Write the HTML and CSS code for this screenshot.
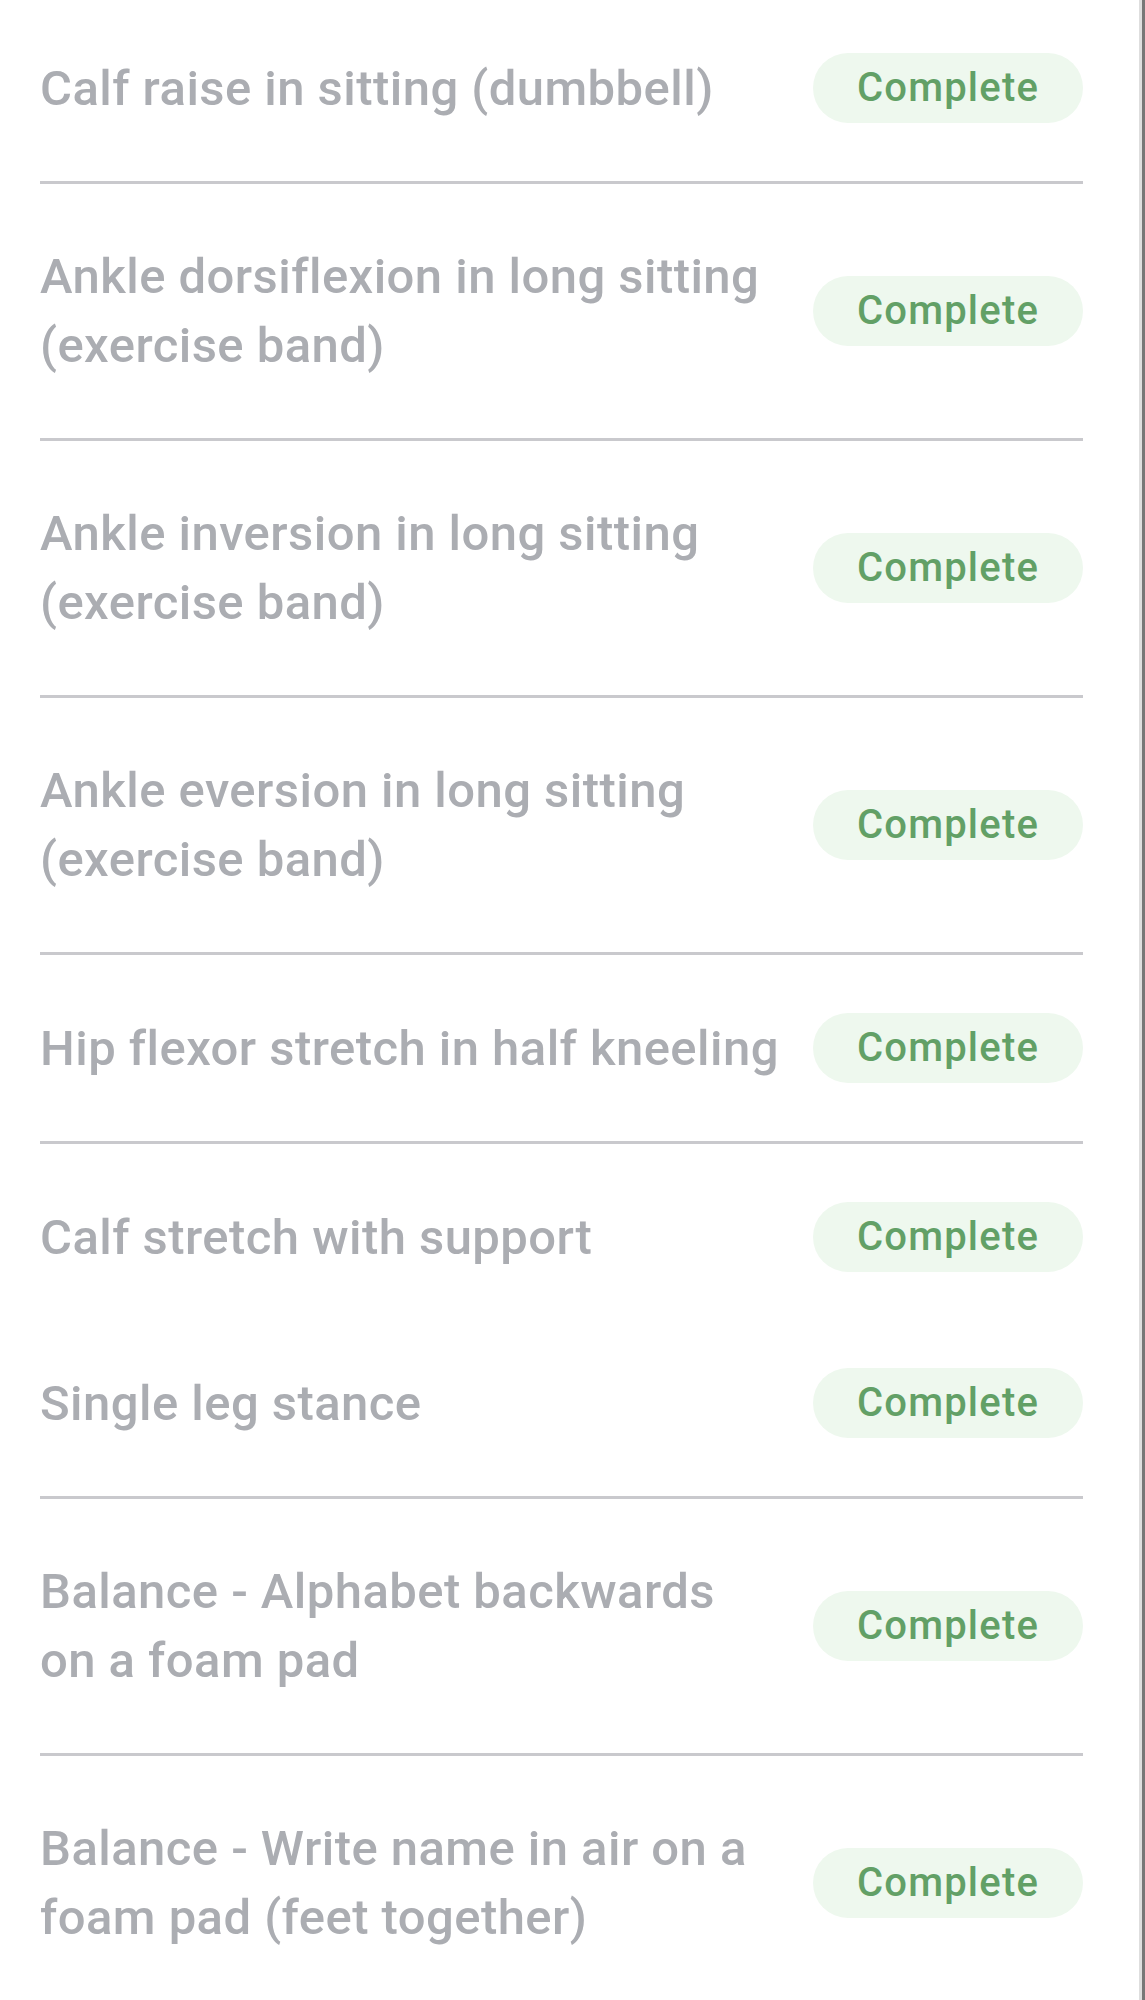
FILE: index.html
```html
<!DOCTYPE html>
<html lang="en">
<head>
  <meta charset="UTF-8">
  <meta name="viewport" content="width=device-width, initial-scale=1.0">
  <title>Exercises</title>
  <link rel="stylesheet" href="styles.css">
</head>
<body>

  <div class="screen">
    <ul class="exercise-list">
      <li class="exercise first">
        <span class="exercise-name">Calf raise in sitting (dumbbell)</span>
        <span class="status">Complete</span>
      </li>
      <li class="exercise">
        <span class="exercise-name">Ankle dorsiflexion in long sitting (exercise band)</span>
        <span class="status">Complete</span>
      </li>
      <li class="exercise">
        <span class="exercise-name">Ankle inversion in long sitting (exercise band)</span>
        <span class="status">Complete</span>
      </li>
      <li class="exercise">
        <span class="exercise-name">Ankle eversion in long sitting (exercise band)</span>
        <span class="status">Complete</span>
      </li>
      <li class="exercise">
        <span class="exercise-name">Hip flexor stretch in half kneeling</span>
        <span class="status">Complete</span>
      </li>
      <li class="exercise no-line">
        <span class="exercise-name">Calf stretch with support</span>
        <span class="status">Complete</span>
      </li>
      <li class="exercise">
        <span class="exercise-name">Single leg stance</span>
        <span class="status">Complete</span>
      </li>
      <li class="exercise">
        <span class="exercise-name">Balance - Alphabet backwards on a foam pad</span>
        <span class="status">Complete</span>
      </li>
      <li class="exercise">
        <span class="exercise-name">Balance - Write name in air on a foam pad (feet together)</span>
        <span class="status">Complete</span>
      </li>
    </ul>
  </div>

</body>
</html>
```

FILE: styles.css
```css
body {
  margin: 0;
  font-family: Roboto, "Liberation Sans", sans-serif;
  background-color: #fff;
  overflow: hidden;
}

.screen {
  min-height: 2000px;
  padding: 0 59px 0 40px;
  border-right: 3px solid #777;
  box-shadow: inset -3px 0 0 #dedede;
}

.exercise-list {
  list-style: none;
  margin: 0;
  padding: 0;
}

.exercise {
  display: flex;
  align-items: center;
  gap: 32px;
  padding: 58px 0;
  border-bottom: 3px solid #c9c9cd;
}

.exercise.first {
  padding-top: 53px;
}

.exercise.no-line {
  border-bottom: none;
  padding-bottom: 38px;
}

.exercise-name {
  flex: 1;
  font-size: 49px;
  font-weight: 500;
  line-height: 69px;
  letter-spacing: 0.45px;
  color: #abadb2;
}

.status {
  flex: none;
  width: 270px;
  height: 70px;
  line-height: 70px;
  text-align: center;
  border-radius: 35px;
  background-color: #eef8ee;
  color: #62a066;
  font-size: 40px;
  font-weight: 500;
  letter-spacing: 1.2px;
}
```
